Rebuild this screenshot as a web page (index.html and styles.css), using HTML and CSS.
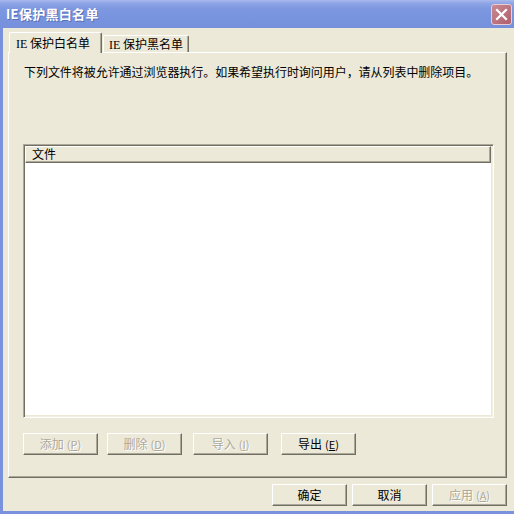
FILE: index.html
```html
<!DOCTYPE html>
<html lang="zh-CN">
<head>
<meta charset="utf-8">
<title>IE保护黑白名单</title>
<link rel="stylesheet" href="styles.css">
</head>
<body>
<div class="window">
  <div class="titlebar">
    <span class="title">IE保护黑白名单</span>
    <span class="close">
      <svg width="13" height="13" viewBox="0 0 13 13"><path d="M2 2 L11 11 M11 2 L2 11" stroke="#fff" stroke-width="2.2" stroke-linecap="square"/></svg>
    </span>
  </div>
  <div class="frame">
    <div class="tabs">
      <div class="tab active"><span class="latin">IE</span> 保护白名单</div>
      <div class="tab"><span class="latin">IE</span> 保护黑名单</div>
    </div>
    <div class="panel">
      <p class="desc">下列文件将被允许通过浏览器执行。如果希望执行时询问用户，请从列表中删除项目。</p>
      <div class="list">
        <div class="list-header"><span class="col">文件</span></div>
        <div class="list-body"></div>
      </div>
      <div class="actions">
        <button class="btn disabled">添加<span class="key">(<u>P</u>)</span></button>
        <button class="btn disabled">删除<span class="key">(<u>D</u>)</span></button>
        <button class="btn disabled">导入<span class="key">(<u>I</u>)</span></button>
        <button class="btn">导出<span class="key">(<u>E</u>)</span></button>
      </div>
    </div>
    <div class="footer">
      <button class="btn">确定</button>
      <button class="btn">取消</button>
      <button class="btn disabled">应用<span class="key">(<u>A</u>)</span></button>
    </div>
  </div>
</div>
</body>
</html>
```
FILE: styles.css
```css
* { box-sizing: border-box; }
html, body { margin: 0; padding: 0; }
body {
  width: 514px;
  height: 514px;
  overflow: hidden;
  font-family: "Noto Sans CJK SC", "DejaVu Sans", sans-serif;
  font-size: 12px;
  color: #000;
}
.window {
  width: 514px;
  height: 514px;
  display: flex;
  flex-direction: column;
  background: #ECE9D8;
}
.titlebar {
  height: 28px;
  flex: none;
  display: flex;
  align-items: center;
  padding-left: 6px;
  background: linear-gradient(#A9BAEC 0, #90A6E6 3px, #7E98E1 8px, #7893DE 20px, #7690DB 28px);
}
.title {
  color: #fff;
  font-weight: bold;
  font-size: 13px;
  line-height: 16px;
  text-shadow: 1px 1px 0 #5A70B8;
  letter-spacing: 0.3px;
}
.close {
  margin-left: auto;
  margin-right: 2px;
  margin-top: 1px;
  width: 21px;
  height: 21px;
  border: 1px solid #E9CDD3;
  border-radius: 3px;
  background: linear-gradient(135deg, #C98A94, #AE5F6D);
  display: flex;
  align-items: center;
  justify-content: center;
}
.frame {
  flex: 1;
  display: flex;
  flex-direction: column;
  border-left: 3px solid #7A92DE;
  border-bottom: 3px solid #7A92DE;
  padding: 4px 7px 5px 5px;
}
.tabs {
  display: flex;
  height: 20px;
  padding-left: 1px;
  flex: none;
}
.tab {
  height: 17px;
  margin-top: 3px;
  padding: 0 5px 0 5px;
  line-height: 16px;
  border-top: 1px solid #fff;
  border-left: 1px solid #fff;
  border-right: 1px solid #716F64;
  box-shadow: inset -1px 0 0 #ACA899;
  border-radius: 2px 2px 0 0;
  background: #ECE9D8;
  white-space: nowrap;
}
.latin {
  font-family: "Liberation Serif", "DejaVu Serif", serif;
  font-size: 12px;
}
.tab.active {
  position: relative;
  z-index: 1;
  height: 21px;
  margin-top: 0;
  margin-right: 1px;
  padding: 2px 8px 0 6px;
  width: 93px;
}
.panel {
  flex: none;
  height: 426px;
  border-top: 1px solid #fff;
  border-left: 1px solid #fff;
  border-right: 1px solid #716F64;
  border-bottom: 1px solid #716F64;
  box-shadow: inset -1px -1px 0 #ACA899;
  padding: 12px 12px 0 14px;
  display: flex;
  flex-direction: column;
}
.desc {
  margin: 0 0 0 1px;
  line-height: 14px;
  white-space: nowrap;
  letter-spacing: -0.05px;
}
.list {
  margin-top: 65px;
  width: 471px;
  height: 274px;
  border-top: 1px solid #ACA899;
  border-left: 1px solid #ACA899;
  border-right: 1px solid #fff;
  border-bottom: 1px solid #fff;
  box-shadow: inset 1px 1px 0 #716F64, inset -1px -1px 0 #F1EFE2;
  padding: 1px;
  display: flex;
  flex-direction: column;
}
.list-header {
  height: 17px;
  flex: none;
  background: #ECE9D8;
  border-top: 1px solid #fff;
  border-left: 1px solid #fff;
  border-right: 1px solid #716F64;
  border-bottom: 1px solid #716F64;
  box-shadow: inset -1px -1px 0 #ACA899;
  margin-right: 1px;
  padding-left: 6px;
  line-height: 14px;
}
.list-body {
  flex: 1;
  background: #fff;
  margin-right: 1px;
  margin-bottom: 1px;
}
.actions {
  display: flex;
  margin-top: 15px;
}
.actions .btn:nth-child(2) { margin-left: 9px; }
.actions .btn:nth-child(3) { margin-left: 11px; }
.actions .btn:nth-child(4) { margin-left: 13px; }
.btn {
  width: 75px;
  height: 22px;
  padding: 0;
  margin: 0;
  font: inherit;
  font-size: 12px;
  line-height: 18px;
  color: #000;
  background: #ECE9D8;
  border-top: 1px solid #fff;
  border-left: 1px solid #fff;
  border-right: 1px solid #716F64;
  border-bottom: 1px solid #716F64;
  box-shadow: inset -1px -1px 0 #ACA899;
  border-radius: 0;
  text-align: center;
}
.key {
  margin-left: 3px;
  font-size: 11px;
}
.btn u { text-underline-offset: 1px; }
.btn.disabled {
  color: #ACA899;
  text-shadow: 1px 1px 0 #fff;
}
.footer {
  display: flex;
  justify-content: flex-end;
  gap: 5px;
  margin-top: 6px;
}
```
